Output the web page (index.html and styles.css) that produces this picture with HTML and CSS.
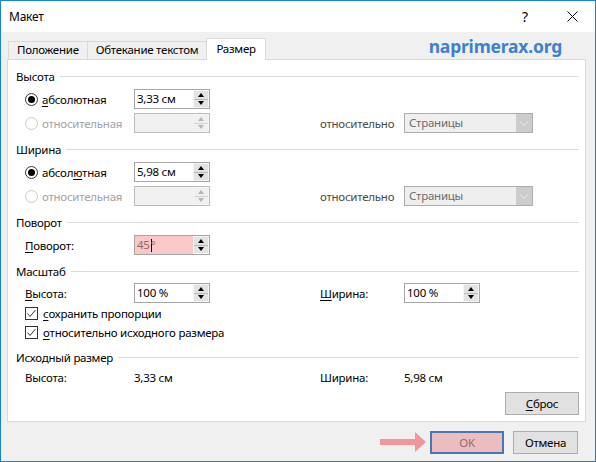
FILE: index.html
```html
<!DOCTYPE html>
<html lang="ru">
<head>
  <meta charset="UTF-8">
  <title>Макет</title>
  <link rel="stylesheet" href="styles.css">
</head>
<body>
  <div class="window">
    <div class="titlebar">
      <span class="title">Макет</span>
      <span class="help">?</span>
      <span class="close">
        <svg width="11" height="11" viewBox="0 0 11 11"><path d="M0.5 0.5 L10.5 10.5 M10.5 0.5 L0.5 10.5" stroke="#000" stroke-width="1" fill="none"/></svg>
      </span>
    </div>

    <div class="tabbar">
      <div class="tab">Положение</div>
      <div class="tab">Обтекание текстом</div>
      <div class="tab active">Размер</div>
      <div class="brand">naprimerax.org</div>
    </div>

    <div class="panel">
      <!-- высота -->
      <div class="group">
        <div class="group-title">Высота</div>
        <div class="row">
          <label class="opt"><span class="radio checked"></span><u>а</u>бсолютная</label>
          <div class="spin-box"><span class="value">3,33 см</span><span class="spin"><i class="up"></i><i class="down"></i></span></div>
        </div>
        <div class="row">
          <label class="opt disabled"><span class="radio"></span>относительная</label>
          <div class="spin-box off"><span class="value"></span><span class="spin"><i class="up"></i><i class="down"></i></span></div>
          <span class="side-label">относительно</span>
          <div class="select"><span class="value">Страницы</span><span class="drop"></span></div>
        </div>
      </div>

      <!-- ширина -->
      <div class="group">
        <div class="group-title">Ширина</div>
        <div class="row">
          <label class="opt"><span class="radio checked"></span>абсол<u>ю</u>тная</label>
          <div class="spin-box"><span class="value">5,98 см</span><span class="spin"><i class="up"></i><i class="down"></i></span></div>
        </div>
        <div class="row">
          <label class="opt disabled"><span class="radio"></span>относительная</label>
          <div class="spin-box off"><span class="value"></span><span class="spin"><i class="up"></i><i class="down"></i></span></div>
          <span class="side-label">относительно</span>
          <div class="select"><span class="value">Страницы</span><span class="drop"></span></div>
        </div>
      </div>

      <!-- поворот -->
      <div class="group">
        <div class="group-title">Поворот</div>
        <div class="row">
          <span class="opt"><u>П</u>оворот:</span>
          <div class="spin-box focus"><span class="value">45<span class="caret"></span>°</span><span class="spin"><i class="up"></i><i class="down"></i></span></div>
        </div>
      </div>

      <!-- масштаб -->
      <div class="group scale">
        <div class="group-title">Масштаб</div>
        <div class="row short">
          <span class="opt"><u>В</u>ысота:</span>
          <div class="spin-box"><span class="value">100 %</span><span class="spin"><i class="up"></i><i class="down"></i></span></div>
          <span class="side-label dark"><u>Ш</u>ирина:</span>
          <div class="spin-box"><span class="value">100 %</span><span class="spin"><i class="up"></i><i class="down"></i></span></div>
        </div>
        <div class="row check-row">
          <label class="check"><span class="box"><svg width="11" height="11" viewBox="0 0 11 11"><path d="M1.5 5.5 L4 8.5 L9.5 2" stroke="#333" stroke-width="1" fill="none"/></svg></span><u>с</u>охранить пропорции</label>
        </div>
        <div class="row check-row">
          <label class="check"><span class="box"><svg width="11" height="11" viewBox="0 0 11 11"><path d="M1.5 5.5 L4 8.5 L9.5 2" stroke="#333" stroke-width="1" fill="none"/></svg></span><u>о</u>тносительно исходного размера</label>
        </div>
      </div>

      <!-- исходный размер -->
      <div class="group original">
        <div class="group-title">Исходный размер</div>
        <div class="row info">
          <span class="opt">Высота:</span>
          <span>3,33 см</span>
          <span class="side-label dark">Ширина:</span>
          <span>5,98 см</span>
        </div>
      </div>

      <div class="panel-foot">
        <button type="button" class="btn"><u>С</u>брос</button>
      </div>
    </div>

    <div class="footer">
      <svg class="arrow" width="46" height="20" viewBox="0 0 46 20"><path d="M0 7 H35 V0 L46 10 L35 20 V13 H0 Z" fill="#f2969b"/></svg>
      <button type="button" class="btn ok">OK</button>
      <button type="button" class="btn cancel">Отмена</button>
    </div>
  </div>
</body>
</html>
```

FILE: styles.css
```css
* { box-sizing: border-box; }
body { margin: 0; font-family: "Segoe UI", "Noto Sans", sans-serif; font-size: 11.5px; letter-spacing: -0.25px; color: #000; }
u { text-decoration: underline; text-underline-offset: 2px; }

.window { width: 596px; height: 462px; border: 1px solid #1883d7; background: #f0f0f0; display: flex; flex-direction: column; }

.titlebar { height: 31px; flex-shrink: 0; background: #fff; display: flex; align-items: center; padding-left: 8px; }
.title { flex: 1; font-size: 12px; }
.help { width: 16px; text-align: center; font-size: 14px; margin-right: 16px; }
.close { width: 46px; height: 31px; display: flex; align-items: center; justify-content: center; }

.tabbar { height: 27px; flex-shrink: 0; display: flex; align-items: flex-end; padding-left: 7px; }
.tab { height: 18px; line-height: 16px; padding: 0 8px; border: 1px solid #d9d9d9; border-bottom: none; margin-right: -1px; background: #f0f0f0; white-space: nowrap; }
.tab.active { height: 22px; line-height: 20px; padding: 0 9px; background: #fff; margin-bottom: -1px; position: relative; z-index: 1; }
.brand { margin-left: auto; margin-right: 33px; align-self: center; padding-top: 1px; font-size: 17.5px; font-weight: bold; color: #3f7fd1; letter-spacing: -0.2px; }

.panel { height: 363px; flex-shrink: 0; margin: 0 9px 0 6px; background: #fff; border: 1px solid #d9d9d9; padding: 5px 6px 0 0; }

.group + .group { margin-top: 3px; }
.group.original { margin-top: 4px; }
.group-title { height: 22px; display: flex; align-items: center; gap: 5px; padding-left: 8px; }
.group-title::after { content: ""; flex: 1; height: 1px; background: #dcdcdc; }

.row { height: 24px; display: grid; grid-template-columns: 126px 186px 84px 1fr; align-items: center; }
.row.short { height: 22px; }
.row.check-row { height: 19px; }
.row.info { height: 18px; }
.opt { padding-left: 17px; display: flex; align-items: center; white-space: nowrap; }
.opt.disabled { color: #a3a3a3; }
.side-label { color: #4a4a4a; }
.side-label.dark { color: #000; }

.radio { width: 13px; height: 13px; border: 1px solid #333; border-radius: 50%; margin-right: 4px; display: flex; align-items: center; justify-content: center; background: #fff; }
.radio.checked::after { content: ""; width: 7px; height: 7px; border-radius: 50%; background: #000; }
.disabled .radio { border-color: #cccccc; }

.check { grid-column: 1 / -1; padding-left: 17px; display: flex; align-items: center; }
.box { width: 13px; height: 13px; border: 1px solid #333; margin-right: 5px; display: flex; align-items: center; justify-content: center; }

.spin-box { width: 76px; height: 20px; border: 1px solid #a6a6a6; background: #fff; display: flex; }
.spin-box .value { flex: 1; padding-left: 2px; line-height: 18px; display: flex; align-items: center; }
.spin-box.off { background: #f0f0f0; border-color: #bcbcbc; }
.spin-box.focus { background: #f9c9ca; }
.spin-box.focus .value { color: #8e6767; }
.caret { width: 1px; height: 13px; background: #000; margin: 0 -1px 0 1px; }

.spin { width: 16px; display: flex; flex-direction: column; background: #e3e3e3; border: 1px solid #f4f4f4; }
.spin i { flex: 1; display: flex; align-items: center; justify-content: center; }
.spin i.up { border-bottom: 1px solid #b9b9b9; }
.spin i::after { content: ""; border-left: 3.5px solid transparent; border-right: 3.5px solid transparent; }
.spin i.up::after { border-bottom: 4px solid #000; }
.spin i.down::after { border-top: 4px solid #000; }
.off .spin { background: #f0f0f0; }
.off .spin i.up { border-bottom-color: #d4d4d4; }
.off .spin i.up::after { border-bottom-color: #b5b5b5; }
.off .spin i.down::after { border-top-color: #b5b5b5; }

.select { width: 129px; height: 20px; border: 1px solid #adadad; background: #efefef; display: flex; color: #6d6d6d; }
.select .value { flex: 1; padding-left: 4px; line-height: 18px; }
.select .drop { width: 16px; background: #cccccc; display: flex; align-items: center; justify-content: center; }
.select .drop::after { content: ""; width: 5px; height: 5px; border-right: 1px solid #e4e4e4; border-bottom: 1px solid #e4e4e4; transform: rotate(45deg); margin-top: -3px; }

.panel-foot { display: flex; justify-content: flex-end; margin-top: 6px; }

.btn { height: 23px; font-family: inherit; font-size: 11.5px; letter-spacing: -0.25px; color: #000; background: #e1e1e1; border: 1px solid #adadad; padding: 0; }
.panel-foot .btn { width: 74px; }

.footer { flex: 1; display: flex; justify-content: flex-end; align-items: flex-start; padding: 9px 17px 0 0; }
.arrow { margin: 1px 4px 0 0; }
.btn.ok { width: 74px; background: #ecbdbe; border: 2px solid #4677b8; color: #916c6c; margin-right: 9px; }
.btn.cancel { width: 65px; }
```
